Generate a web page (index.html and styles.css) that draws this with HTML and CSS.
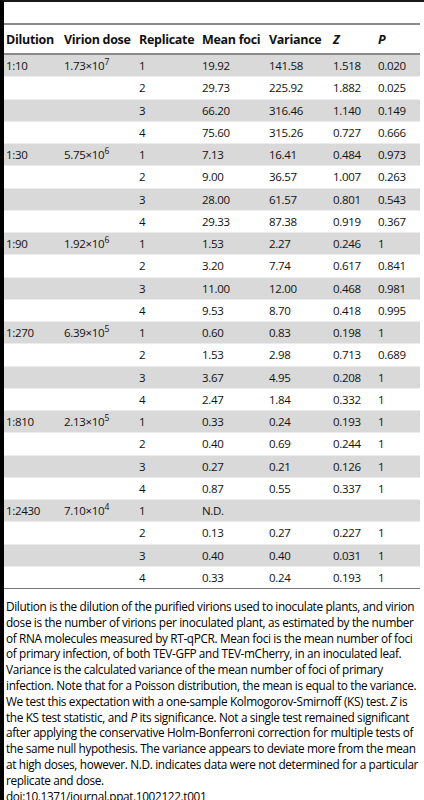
FILE: index.html
```html
<!DOCTYPE html>
<html lang="en">
<head>
    <meta charset="UTF-8">
    <meta name="viewport" content="width=device-width, initial-scale=1.0">
    <title>Table 1</title>
    <link rel="stylesheet" href="styles.css">
</head>
<body>
    <div class="page">
        <table class="data">
            <colgroup>
                <col class="c-dil">
                <col class="c-dose">
                <col class="c-rep">
                <col class="c-mean">
                <col class="c-var">
                <col class="c-z">
                <col class="c-p">
            </colgroup>
            <thead>
                <tr>
                    <th>Dilution</th>
                    <th>Virion dose</th>
                    <th>Replicate</th>
                    <th>Mean foci</th>
                    <th>Variance</th>
                    <th><i>Z</i></th>
                    <th><i>P</i></th>
                </tr>
            </thead>
            <tbody>
                <tr><td>1:10</td><td>1.73×10<sup>7</sup></td><td>1</td><td>19.92</td><td>141.58</td><td>1.518</td><td>0.020</td></tr>
                <tr><td></td><td></td><td>2</td><td>29.73</td><td>225.92</td><td>1.882</td><td>0.025</td></tr>
                <tr><td></td><td></td><td>3</td><td>66.20</td><td>316.46</td><td>1.140</td><td>0.149</td></tr>
                <tr><td></td><td></td><td>4</td><td>75.60</td><td>315.26</td><td>0.727</td><td>0.666</td></tr>
                <tr><td>1:30</td><td>5.75×10<sup>6</sup></td><td>1</td><td>7.13</td><td>16.41</td><td>0.484</td><td>0.973</td></tr>
                <tr><td></td><td></td><td>2</td><td>9.00</td><td>36.57</td><td>1.007</td><td>0.263</td></tr>
                <tr><td></td><td></td><td>3</td><td>28.00</td><td>61.57</td><td>0.801</td><td>0.543</td></tr>
                <tr><td></td><td></td><td>4</td><td>29.33</td><td>87.38</td><td>0.919</td><td>0.367</td></tr>
                <tr><td>1:90</td><td>1.92×10<sup>6</sup></td><td>1</td><td>1.53</td><td>2.27</td><td>0.246</td><td>1</td></tr>
                <tr><td></td><td></td><td>2</td><td>3.20</td><td>7.74</td><td>0.617</td><td>0.841</td></tr>
                <tr><td></td><td></td><td>3</td><td>11.00</td><td>12.00</td><td>0.468</td><td>0.981</td></tr>
                <tr><td></td><td></td><td>4</td><td>9.53</td><td>8.70</td><td>0.418</td><td>0.995</td></tr>
                <tr><td>1:270</td><td>6.39×10<sup>5</sup></td><td>1</td><td>0.60</td><td>0.83</td><td>0.198</td><td>1</td></tr>
                <tr><td></td><td></td><td>2</td><td>1.53</td><td>2.98</td><td>0.713</td><td>0.689</td></tr>
                <tr><td></td><td></td><td>3</td><td>3.67</td><td>4.95</td><td>0.208</td><td>1</td></tr>
                <tr><td></td><td></td><td>4</td><td>2.47</td><td>1.84</td><td>0.332</td><td>1</td></tr>
                <tr><td>1:810</td><td>2.13×10<sup>5</sup></td><td>1</td><td>0.33</td><td>0.24</td><td>0.193</td><td>1</td></tr>
                <tr><td></td><td></td><td>2</td><td>0.40</td><td>0.69</td><td>0.244</td><td>1</td></tr>
                <tr><td></td><td></td><td>3</td><td>0.27</td><td>0.21</td><td>0.126</td><td>1</td></tr>
                <tr><td></td><td></td><td>4</td><td>0.87</td><td>0.55</td><td>0.337</td><td>1</td></tr>
                <tr><td>1:2430</td><td>7.10×10<sup>4</sup></td><td>1</td><td>N.D.</td><td></td><td></td><td></td></tr>
                <tr><td></td><td></td><td>2</td><td>0.13</td><td>0.27</td><td>0.227</td><td>1</td></tr>
                <tr><td></td><td></td><td>3</td><td>0.40</td><td>0.40</td><td>0.031</td><td>1</td></tr>
                <tr><td></td><td></td><td>4</td><td>0.33</td><td>0.24</td><td>0.193</td><td>1</td></tr>
            </tbody>
        </table>

        <p class="caption">Dilution is the dilution of the purified virions used to inoculate plants, and virion dose is the number of virions per inoculated plant, as estimated by the number of RNA molecules measured by RT-qPCR. Mean foci is the mean number of foci of primary infection, of both TEV-GFP and TEV-mCherry, in an inoculated leaf. Variance is the calculated variance of the mean number of foci of primary infection. Note that for a Poisson distribution, the mean is equal to the variance. We test this expectation with a one-sample Kolmogorov-Smirnoff (KS) test. <i>Z</i> is the KS test statistic, and <i>P</i> its significance. Not a single test remained significant after applying the conservative Holm-Bonferroni correction for multiple tests of the same null hypothesis. The variance appears to deviate more from the mean at high doses, however. N.D. indicates data were not determined for a particular replicate and dose.</p>
        <p class="doi">doi:10.1371/journal.ppat.1002122.t001</p>
    </div>
</body>
</html>
```

FILE: styles.css
```css
body {
    margin: 0;
    font-family: "Open Sans", "Noto Sans", sans-serif;
    color: #111;
    background-color: #fff;
}
.page {
    border-left: 4px solid #000;
    border-top: 2px solid #1a1a1a;
    min-height: 798px;
    padding-top: 21px;
    box-sizing: border-box;
}
.data {
    width: 416px;
    border-collapse: collapse;
    table-layout: fixed;
    border-top: 2px solid #8a8a8a;
    border-bottom: 1px solid #777;
}
.c-dil { width: 58px; }
.c-dose { width: 75px; }
.c-rep { width: 63px; }
.c-mean { width: 67px; }
.c-var { width: 64px; }
.c-z { width: 45px; }
.c-p { width: 44px; }
th {
    height: 28px;
    padding: 0 0 0 2px;
    text-align: left;
    font-size: 12.5px;
    font-weight: bold;
    letter-spacing: -0.3px;
    white-space: nowrap;
    border-bottom: 2px solid #8a8a8a;
}
td {
    height: 21.25px;
    padding: 0 0 0 2px;
    font-size: 11.5px;
    letter-spacing: -0.3px;
    white-space: nowrap;
    border-bottom: 1px solid #ececec;
}
tbody tr:nth-child(odd) td {
    background-color: #d9d9d9;
}
tbody tr:last-child td {
    border-bottom: none;
}
sup {
    font-size: 8.5px;
    line-height: 0;
    vertical-align: 5px;
    letter-spacing: 0;
}
.caption {
    margin: 10px 4px 0 2px;
    font-size: 11.8px;
    line-height: 15.8px;
    letter-spacing: -0.35px;
    color: #000;
}
.doi {
    margin: 0 0 0 2px;
    font-size: 11.8px;
    line-height: 15.8px;
    letter-spacing: -0.35px;
    color: #000;
}
```
